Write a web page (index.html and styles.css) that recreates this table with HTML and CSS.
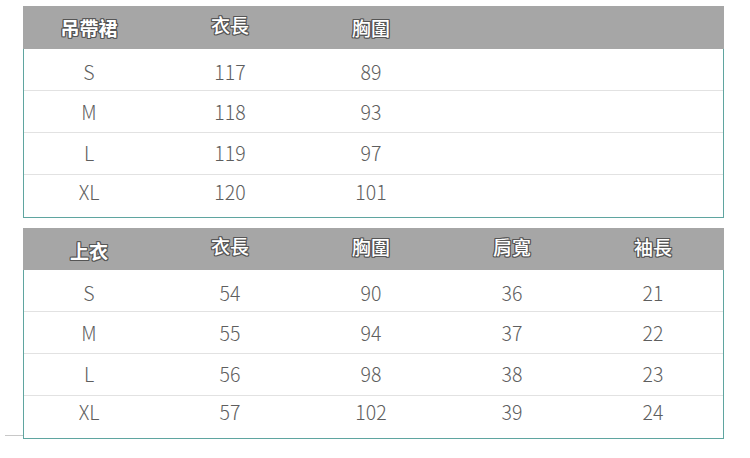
FILE: index.html
```html
<!DOCTYPE html>
<html lang="zh-Hant">
<head>
<meta charset="utf-8">
<link rel="stylesheet" href="styles.css">
</head>
<body>
<div class="page">
  <div class="table t1">
    <div class="row head">
      <div class="cell title">吊帶裙</div>
      <div class="cell up">衣長</div>
      <div class="cell">胸圍</div>
    </div>
    <div class="row r1"><div class="cell">S</div><div class="cell">117</div><div class="cell">89</div></div>
    <div class="row r2"><div class="cell">M</div><div class="cell">118</div><div class="cell">93</div></div>
    <div class="row r3"><div class="cell">L</div><div class="cell">119</div><div class="cell">97</div></div>
    <div class="row r4 last"><div class="cell">XL</div><div class="cell">120</div><div class="cell">101</div></div>
  </div>
  <div class="table t2">
    <div class="row head">
      <div class="cell title low">上衣</div>
      <div class="cell up">衣長</div>
      <div class="cell up2">胸圍</div>
      <div class="cell up2">肩寬</div>
      <div class="cell up2">袖長</div>
    </div>
    <div class="row r1"><div class="cell">S</div><div class="cell">54</div><div class="cell">90</div><div class="cell">36</div><div class="cell">21</div></div>
    <div class="row r2"><div class="cell">M</div><div class="cell">55</div><div class="cell">94</div><div class="cell">37</div><div class="cell">22</div></div>
    <div class="row r3"><div class="cell">L</div><div class="cell">56</div><div class="cell">98</div><div class="cell">38</div><div class="cell">23</div></div>
    <div class="row r4 last"><div class="cell">XL</div><div class="cell">57</div><div class="cell">102</div><div class="cell">39</div><div class="cell">24</div></div>
    <div class="sideline"></div>
  </div>
</div>
</body>
</html>
```
FILE: styles.css
```css
html, body {
  margin: 0;
  padding: 0;
  background: #ffffff;
}
body {
  font-family: "Noto Sans CJK TC", "Noto Sans", sans-serif;
  color: #5e5e5e;
}
.page {
  padding-top: 6px;
  padding-left: 23px;
  display: flex;
  flex-direction: column;
  gap: 10px;
}
.table {
  width: 701px;
  box-sizing: border-box;
  border-left: 1px solid #5fa5a0;
  border-right: 1px solid #5fa5a0;
  border-bottom: 1px solid #5fa5a0;
  position: relative;
}
.row {
  display: flex;
  gap: 21px;
  padding-left: 5px;
  height: 41px;
  border-bottom: 1px solid #e2e2e2;
  align-items: center;
}
.row.last {
  border-bottom: none;
  height: 42px;
}
.row.head {
  background: #a6a6a6;
  height: 43px;
  border-bottom: none;
  margin-left: -1px;
  margin-right: -1px;
  padding-left: 6px;
}
.t2 .row.head { height: 42px; }
.cell {
  width: 120px;
  text-align: center;
  font-size: 19.5px;
  font-weight: 300;
  line-height: 20px;
}
.r1 .cell { margin-top: 4px; }
.r2 .cell { margin-top: 1px; }
.r3 .cell { margin-top: -1px; }
.r4 .cell { margin-top: -8px; }
.t2 .r1 .cell { margin-top: 5px; }
.t2 .r4 .cell { margin-top: -10px; }
.head .cell {
  color: #ffffff;
  font-weight: 500;
  font-size: 19px;
  text-shadow:
    1px 0 0 #555, -1px 0 0 #555, 0 1px 0 #555, 0 -1px 0 #555,
    1px 1px 0 #555, -1px -1px 0 #555, 1px -1px 0 #555, -1px 1px 0 #555;
}
.head .cell.title {
  font-weight: 700;
}
.head .cell.up {
  margin-top: -6px;
}
.head .cell.up2 {
  margin-top: -4px;
}
.head .cell.low {
  margin-top: 4px;
}
.sideline {
  position: absolute;
  left: -19px;
  bottom: 2px;
  width: 18px;
  height: 1px;
  background: #c8c8c8;
}
```
